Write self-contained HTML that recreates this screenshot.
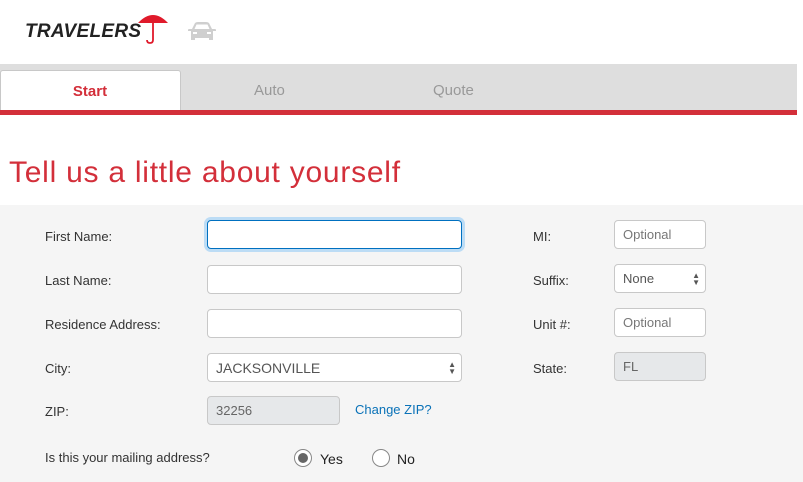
<!DOCTYPE html>
<html><head><style>
body{margin:0;width:803px;height:482px;overflow:hidden;background:#fff;font-family:"Liberation Sans",Arial,sans-serif;position:relative}
.a{position:absolute}
.lbl{position:absolute;font-size:13px;color:#333}
.in{position:absolute;box-sizing:border-box;background:#fff;border:1px solid #c8c8c8;border-radius:4px;font-size:13px;color:#555;padding-left:8px;display:flex;align-items:center}
.dis{background:#e6e8ea}
.ph{color:#777}
</style></head><body>
<div class="a" style="left:25px;top:21px;font-size:19px;font-weight:bold;font-style:italic;color:#222;letter-spacing:0.3px">TRAVELERS</div>
<svg class="a" style="left:137px;top:11px" width="32" height="34" viewBox="0 0 32 34"><path d="M1 12 Q16 -4 31 12 Z" fill="#e01a2b"/><path d="M16 11 V29 Q16 32 13 32 Q10 32 10 29" stroke="#e01a2b" stroke-width="1.8" fill="none"/></svg>
<svg class="a" style="left:187px;top:21px" width="30" height="22" viewBox="0 0 30 22"><path d="M5 8 L8 2 Q9 1 11 1 H19 Q21 1 22 2 L25 8 L28 8 Q29 8 29 9 V10 H26 V19 H22 V17 H8 V19 H4 V10 H1 V9 Q1 8 2 8 Z" fill="#cfcfcf"/><path d="M7.5 8 L9.5 3.5 H20.5 L22.5 8 Z" fill="#fff"/><rect x="6" y="11" width="4" height="2" fill="#fff"/><rect x="20" y="11" width="4" height="2" fill="#fff"/></svg>
<div class="a" style="left:0;top:64px;width:797px;height:46px;background:#dedede"></div>
<div class="a" style="left:0;top:70px;width:181px;height:40px;background:#fff;border:1px solid #c8c8c8;border-bottom:none;border-radius:3px 3px 0 0;box-sizing:border-box"></div>
<div class="a" style="left:0;top:83px;width:180px;text-align:center;font-size:15px;font-weight:bold;color:#d32f3a">Start</div>
<div class="a" style="left:254px;top:82px;font-size:15px;color:#999">Auto</div>
<div class="a" style="left:433px;top:82px;font-size:15px;color:#999">Quote</div>
<div class="a" style="left:0;top:110px;width:797px;height:5px;background:#d32f3a"></div>
<div class="a" style="left:9px;top:156px;font-size:30px;color:#d32f3a;letter-spacing:0.75px">Tell us a little about yourself</div>
<div class="a" style="left:0;top:205px;width:803px;height:277px;background:#f5f5f5"></div>
<div class="lbl" style="left:45px;top:229px">First Name:</div>
<div class="lbl" style="left:45px;top:273px">Last Name:</div>
<div class="lbl" style="left:45px;top:317px">Residence Address:</div>
<div class="lbl" style="left:45px;top:361px">City:</div>
<div class="lbl" style="left:45px;top:404px">ZIP:</div>
<div class="lbl" style="left:45px;top:450px">Is this your mailing address?</div>
<div class="in" style="left:207px;top:220px;width:255px;height:29px;border:1px solid #0070c0;box-shadow:0 0 0 3px #bcdcf5"></div>
<div class="in" style="left:207px;top:265px;width:255px;height:29px"></div>
<div class="in" style="left:207px;top:309px;width:255px;height:29px"></div>
<div class="in" style="left:207px;top:353px;width:255px;height:29px;font-size:14px">JACKSONVILLE<span style="position:absolute;right:5px;font-size:8px;line-height:7px;color:#555">▲<br>▼</span></div>
<div class="in dis" style="left:207px;top:396px;width:133px;height:29px;color:#666">32256</div>
<div class="a" style="left:355px;top:402px;font-size:13px;color:#0a72b8">Change ZIP?</div>
<div class="a" style="left:294px;top:449px;width:18px;height:18px;border:1px solid #888;border-radius:50%;box-sizing:border-box;background:#fff"></div>
<div class="a" style="left:298px;top:453px;width:10px;height:10px;border-radius:50%;background:#666"></div>
<div class="a" style="left:320px;top:451px;font-size:14px;color:#222">Yes</div>
<div class="a" style="left:372px;top:449px;width:18px;height:18px;border:1px solid #888;border-radius:50%;box-sizing:border-box;background:#fff"></div>
<div class="a" style="left:397px;top:451px;font-size:14px;color:#222">No</div>
<div class="lbl" style="left:533px;top:229px">MI:</div>
<div class="lbl" style="left:533px;top:273px">Suffix:</div>
<div class="lbl" style="left:533px;top:317px">Unit #:</div>
<div class="lbl" style="left:533px;top:361px">State:</div>
<div class="in ph" style="left:614px;top:220px;width:92px;height:29px">Optional</div>
<div class="in" style="left:614px;top:264px;width:92px;height:29px">None<span style="position:absolute;right:5px;font-size:8px;line-height:7px;color:#555">▲<br>▼</span></div>
<div class="in ph" style="left:614px;top:308px;width:92px;height:29px">Optional</div>
<div class="in dis" style="left:614px;top:352px;width:92px;height:29px;color:#666">FL</div>
</body></html>
